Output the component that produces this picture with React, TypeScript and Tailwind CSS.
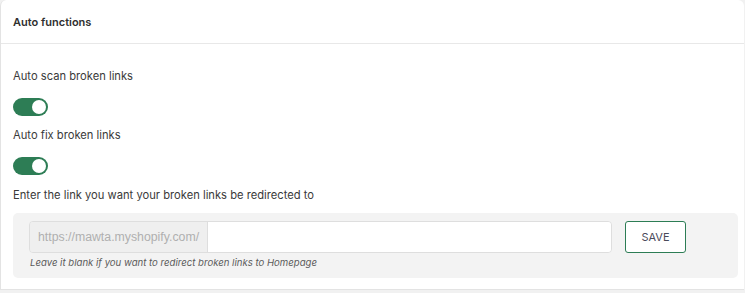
const Toggle = () => (
  <div className="flex h-[18px] w-[35px] items-center justify-end rounded-full bg-[#2d7d55] pr-[2px]">
    <div className="h-[14px] w-[14px] rounded-full bg-white" />
  </div>
);

export default function App() {
  return (
    <div className="h-[293px] w-[745px] bg-[#f1f1f1] font-['Inter',sans-serif] text-[#303030]">
      <div className="h-[290px] w-[744px] rounded-t-[6px] border-b border-l border-[#e3e3e3] bg-white">
        <div className="flex h-[44px] items-center border-b border-[#e8e8e8] px-[12px] pt-[2px]">
          <h2 className="text-[11px] font-semibold">Auto functions</h2>
        </div>
        <div className="pt-[23px] pr-[6px] pl-[12px]">
          <p className="text-[11.2px] leading-[18px] text-[#3a3a3a]">Auto scan broken links</p>
          <div className="mt-[13px]">
            <Toggle />
          </div>
          <p className="mt-[10px] text-[11.2px] leading-[18px] text-[#3a3a3a]">Auto fix broken links</p>
          <div className="mt-[13px]">
            <Toggle />
          </div>
          <p className="mt-[11px] text-[11.2px] leading-[18px] text-[#3a3a3a]">
            Enter the link you want your broken links be redirected to
          </p>
          <div className="mt-[9px] rounded-[5px] bg-[#f3f3f3] px-[16px] pt-[8px] pb-[8px]">
            <div className="flex items-start gap-[13px]">
              <div className="flex h-[32px] w-[583px] overflow-hidden rounded-[4px] border border-[#dedede]">
                <div className="flex items-center border-r border-[#dedede] bg-[#efefef] px-[8px] font-['Liberation_Sans',sans-serif] text-[12.3px] text-[#b0b0b0]">
                  https://mawta.myshopify.com/
                </div>
                <input className="flex-1 bg-white px-2 text-[12px] outline-none" />
              </div>
              <button className="h-[32px] w-[61px] rounded-[3px] border border-[#2d7d55] bg-white text-[11px] text-[#4a4a5a]">
                SAVE
              </button>
            </div>
            <p className="mt-[3px] pl-[1px] text-[9.6px] italic text-[#5a5a5a]">
              Leave it blank if you want to redirect broken links to Homepage
            </p>
          </div>
        </div>
      </div>
    </div>
  );
}
